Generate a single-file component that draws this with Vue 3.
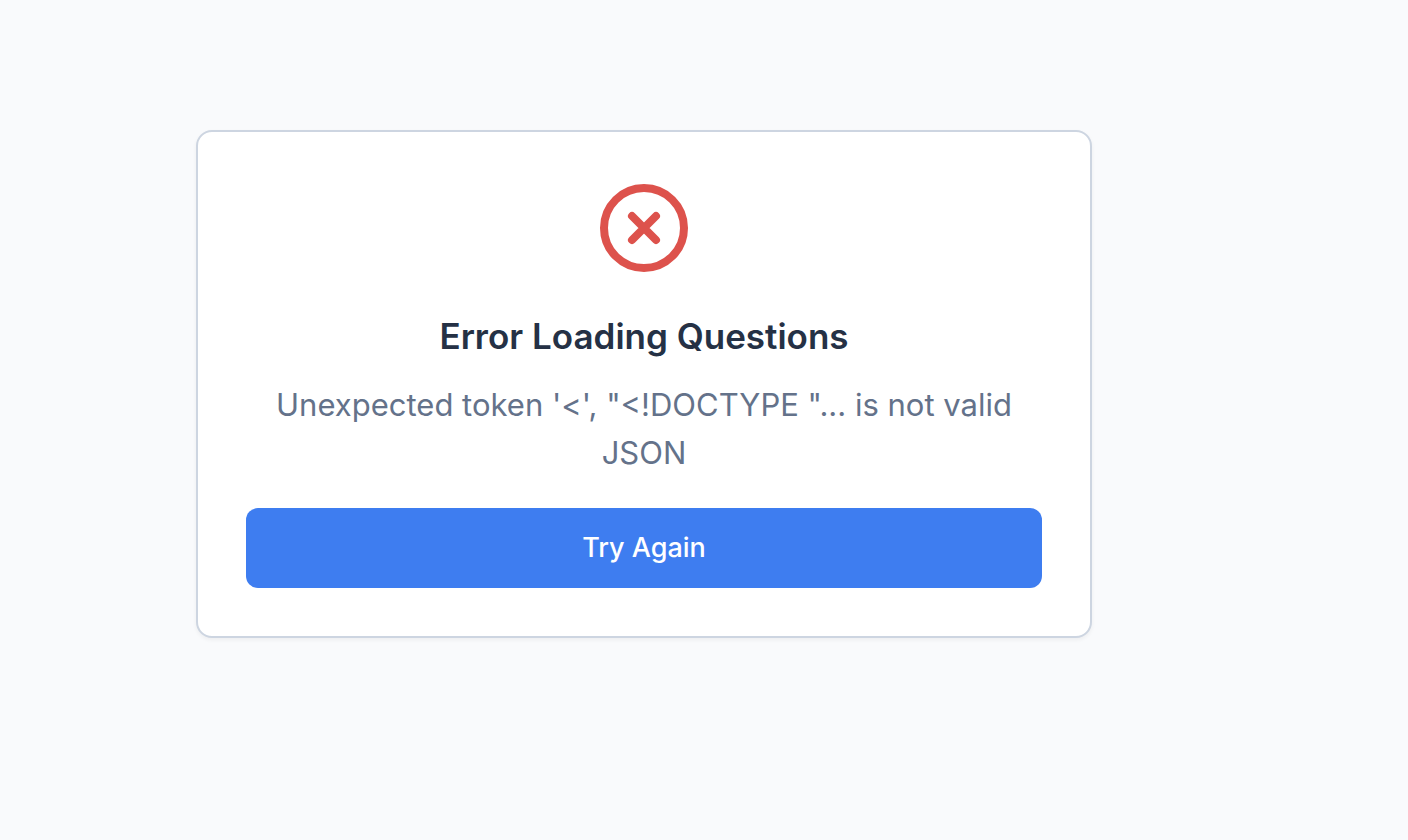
<script setup>
const message = `Unexpected token '<', "<!DOCTYPE "... is not valid JSON`

function retry() {
  window.location.reload()
}
</script>

<template>
  <main class="page">
    <section class="card" role="alert">
      <svg class="icon" viewBox="0 0 96 96" fill="none" aria-hidden="true">
        <circle cx="48" cy="48" r="40" />
        <path d="M36 36 60 60M60 36 36 60" />
      </svg>
      <h1 class="title">Error Loading Questions</h1>
      <p class="message">{{ message }}</p>
      <button class="retry" type="button" @click="retry">Try Again</button>
    </section>
  </main>
</template>

<style>
body {
  background: #f9fafc;
}
</style>

<style scoped>
.page {
  box-sizing: border-box;
  display: flex;
  justify-content: center;
  align-items: center;
  min-height: 100vh;
  padding: 32px 316px 104px 196px;
  font-family: Inter, "Liberation Sans", sans-serif;
}

.card {
  box-sizing: border-box;
  display: flex;
  flex-direction: column;
  align-items: center;
  width: 100%;
  max-width: 896px;
  padding: 48px;
  border: 2px solid #cdd5e1;
  border-radius: 16px;
  background: #ffffff;
  box-shadow: 0 2px 4px rgba(0, 0, 0, 0.05);
  text-align: center;
}

.icon {
  width: 96px;
  height: 96px;
  stroke: #dd524c;
  stroke-width: 8;
  stroke-linecap: round;
  stroke-linejoin: round;
}

.title {
  margin: 32px 0 17px;
  color: #253145;
  font-size: 35px;
  font-weight: 600;
  line-height: 56px;
}

.message {
  margin: 0 0 31px;
  color: #64728a;
  font-size: 31px;
  line-height: 48px;
}

.retry {
  width: 100%;
  height: 80px;
  border: 0;
  border-radius: 12px;
  background: #3e7df0;
  color: #ffffff;
  font-family: inherit;
  font-size: 27px;
  font-weight: 500;
  line-height: 40px;
  cursor: pointer;
}
</style>
